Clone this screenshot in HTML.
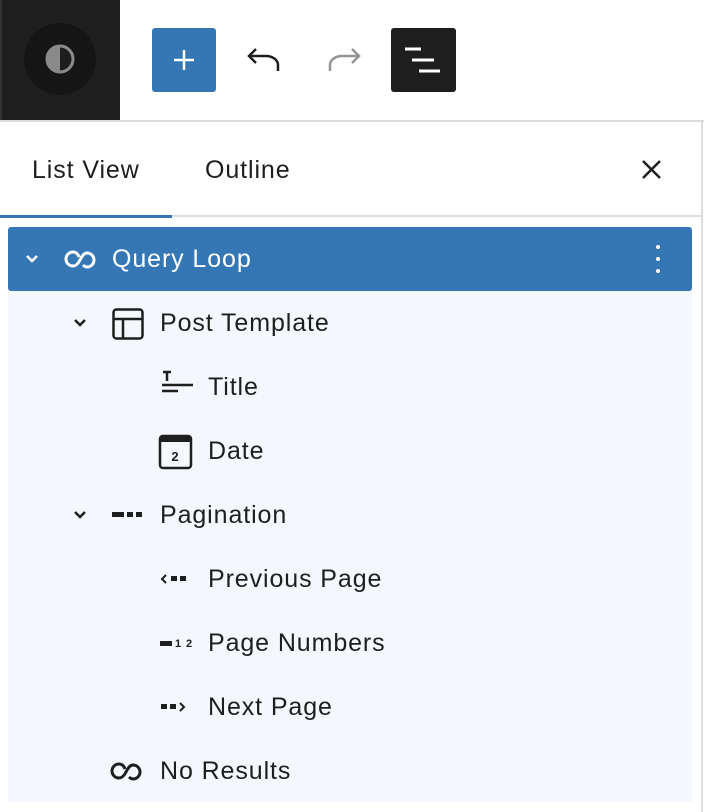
<!DOCTYPE html>
<html><head><meta charset="utf-8"><style>
*{margin:0;padding:0;box-sizing:border-box}
body{width:704px;height:812px;background:#fff;font-family:"Liberation Sans",sans-serif;color:#1e1e1e;position:relative;overflow:hidden}
.abs{position:absolute}
.t{font-size:25px;letter-spacing:0.9px}
.row{position:absolute;left:8px;width:684px;height:64px;font-size:25px;letter-spacing:0.9px;line-height:64px}
.row span{position:absolute;top:0}
svg{position:absolute}
</style></head><body>
<div class="abs" style="left:0;top:0;width:120px;height:120px;background:#1e1e1e;border-left:2px solid #333"></div>
<div class="abs" style="left:24px;top:23px;width:72px;height:72px;border-radius:50%;background:#151515"></div>
<svg style="left:40px;top:40px" width="40" height="40" viewBox="0 0 40 40"><circle cx="20" cy="19" r="13" fill="#1e1e1e" stroke="#8a8a8a" stroke-width="3"/><path d="M20 6a13 13 0 0 0 0 26z" fill="#8a8a8a"/></svg>
<div class="abs" style="left:152px;top:28px;width:64px;height:64px;background:#3477b4;border-radius:3px"></div>
<svg style="left:168px;top:44px" width="32" height="32"><path d="M16 6v20M6 16h20" stroke="#fff" stroke-width="2.5"/></svg>
<svg style="left:244px;top:44px" width="40" height="32"><path d="M12 5L5 12l7 7M5 12h17a12 9 0 0 1 12 9v6" stroke="#1e1e1e" stroke-width="2.5" fill="none"/></svg>
<svg style="left:324px;top:44px" width="40" height="32"><path d="M28 5l7 7-7 7M35 12H18a12 9 0 0 0-12 9v6" stroke="#949494" stroke-width="2.5" fill="none"/></svg>
<div class="abs" style="left:391px;top:28px;width:65px;height:64px;background:#1e1e1e;border-radius:3px"></div>
<svg style="left:391px;top:28px" width="65" height="64"><path d="M14 21h16M21 32h22M28 43h21" stroke="#fff" stroke-width="3"/></svg>
<div class="abs" style="left:0;top:120px;width:704px;height:2px;background:#ddd"></div>
<div class="abs" style="left:701px;top:120px;width:2px;height:692px;background:#ddd"></div>
<div class="abs t" style="left:32px;top:152px;line-height:36px">List View</div>
<div class="abs t" style="left:205px;top:152px;line-height:36px">Outline</div>
<svg style="left:638px;top:156px" width="28" height="28"><path d="M5 5l17 17M22 5L5 22" stroke="#1e1e1e" stroke-width="2.5"/></svg>
<div class="abs" style="left:0;top:215px;width:701px;height:2px;background:#ddd"></div>
<div class="abs" style="left:0;top:215px;width:172px;height:3px;background:#3477b4"></div>
<div class="abs" style="left:8px;top:290px;width:684px;height:512px;background:#f4f7fb"></div>
<div class="row" style="top:227px;background:#3477b4;border-radius:3px;color:#fff">
<svg style="left:16px;top:24px" width="16" height="16"><path d="M3 5l5 5 5-5" stroke="#fff" stroke-width="2.5" fill="none"/></svg>
<svg style="left:56px;top:20px" width="32" height="24"><path d="M15 10c-1-3-3-5-6-5a7 7 0 0 0 0 14c3 0 5-2 7-6s4-7 7-7a7 7 0 0 1 0 14c-2 0-3-1-4-2" stroke="#fff" stroke-width="3" fill="none"/></svg>
<span style="left:104px">Query Loop</span>
<svg style="left:646px;top:16px" width="8" height="32"><circle cx="4" cy="4" r="2" fill="#fff"/><circle cx="4" cy="16" r="2" fill="#fff"/><circle cx="4" cy="28" r="2" fill="#fff"/></svg>
</div>
<div class="row" style="top:291px">
<svg style="left:64px;top:24px" width="16" height="16"><path d="M3 5l5 5 5-5" stroke="#1e1e1e" stroke-width="2.5" fill="none"/></svg>
<svg style="left:104px;top:17px" width="32" height="32"><rect x="1.5" y="1.5" width="29" height="29" rx="3" stroke="#1e1e1e" stroke-width="2.5" fill="none"/><path d="M2 11h28M11 11v19" stroke="#1e1e1e" stroke-width="2.5"/></svg>
<span style="left:152px">Post Template</span></div>
<div class="row" style="top:355px">
<svg style="left:152px;top:14px" width="34" height="34"><path d="M3 3h8M7 3v9M2 16h31M2 22h16" stroke="#1e1e1e" stroke-width="2.5"/></svg>
<span style="left:200px">Title</span></div>
<div class="row" style="top:419px">
<svg style="left:150px;top:15px" width="36" height="36"><rect x="2" y="2" width="31" height="32" rx="3" stroke="#1e1e1e" stroke-width="2.5" fill="none"/><rect x="2" y="2" width="31" height="6" fill="#1e1e1e"/><text x="17.5" y="27" font-size="13" text-anchor="middle" font-family="Liberation Sans" font-weight="bold" fill="#1e1e1e">2</text></svg>
<span style="left:200px">Date</span></div>
<div class="row" style="top:483px">
<svg style="left:64px;top:24px" width="16" height="16"><path d="M3 5l5 5 5-5" stroke="#1e1e1e" stroke-width="2.5" fill="none"/></svg>
<svg style="left:104px;top:28px" width="32" height="8"><rect x="0" y="1" width="12" height="5" fill="#1e1e1e"/><rect x="15" y="1" width="6" height="5" fill="#1e1e1e"/><rect x="24" y="1" width="6" height="5" fill="#1e1e1e"/></svg>
<span style="left:152px">Pagination</span></div>
<div class="row" style="top:547px">
<svg style="left:152px;top:26px" width="32" height="12"><path d="M6 2L2 6l4 4" stroke="#1e1e1e" stroke-width="2" fill="none"/><rect x="11" y="3" width="6" height="5" fill="#1e1e1e"/><rect x="20" y="3" width="6" height="5" fill="#1e1e1e"/></svg>
<span style="left:200px">Previous Page</span></div>
<div class="row" style="top:611px">
<svg style="left:152px;top:24px" width="34" height="16"><rect x="0" y="6" width="12" height="5" fill="#1e1e1e"/><text x="15" y="12" font-size="11" font-weight="bold" font-family="Liberation Sans" fill="#1e1e1e">1 2</text></svg>
<span style="left:200px">Page Numbers</span></div>
<div class="row" style="top:675px">
<svg style="left:152px;top:26px" width="32" height="12"><rect x="1" y="3" width="6" height="5" fill="#1e1e1e"/><rect x="10" y="3" width="6" height="5" fill="#1e1e1e"/><path d="M20 2l4 4-4 4" stroke="#1e1e1e" stroke-width="2" fill="none"/></svg>
<span style="left:200px">Next Page</span></div>
<div class="row" style="top:739px">
<svg style="left:102px;top:20px" width="34" height="24"><path d="M15 10c-1-3-3-5-6-5a7 7 0 0 0 0 14c3 0 5-2 7-6s4-7 7-7a7 7 0 0 1 0 14c-2 0-3-1-4-2" stroke="#1e1e1e" stroke-width="3" fill="none"/></svg>
<span style="left:152px">No Results</span></div>
</body></html>
